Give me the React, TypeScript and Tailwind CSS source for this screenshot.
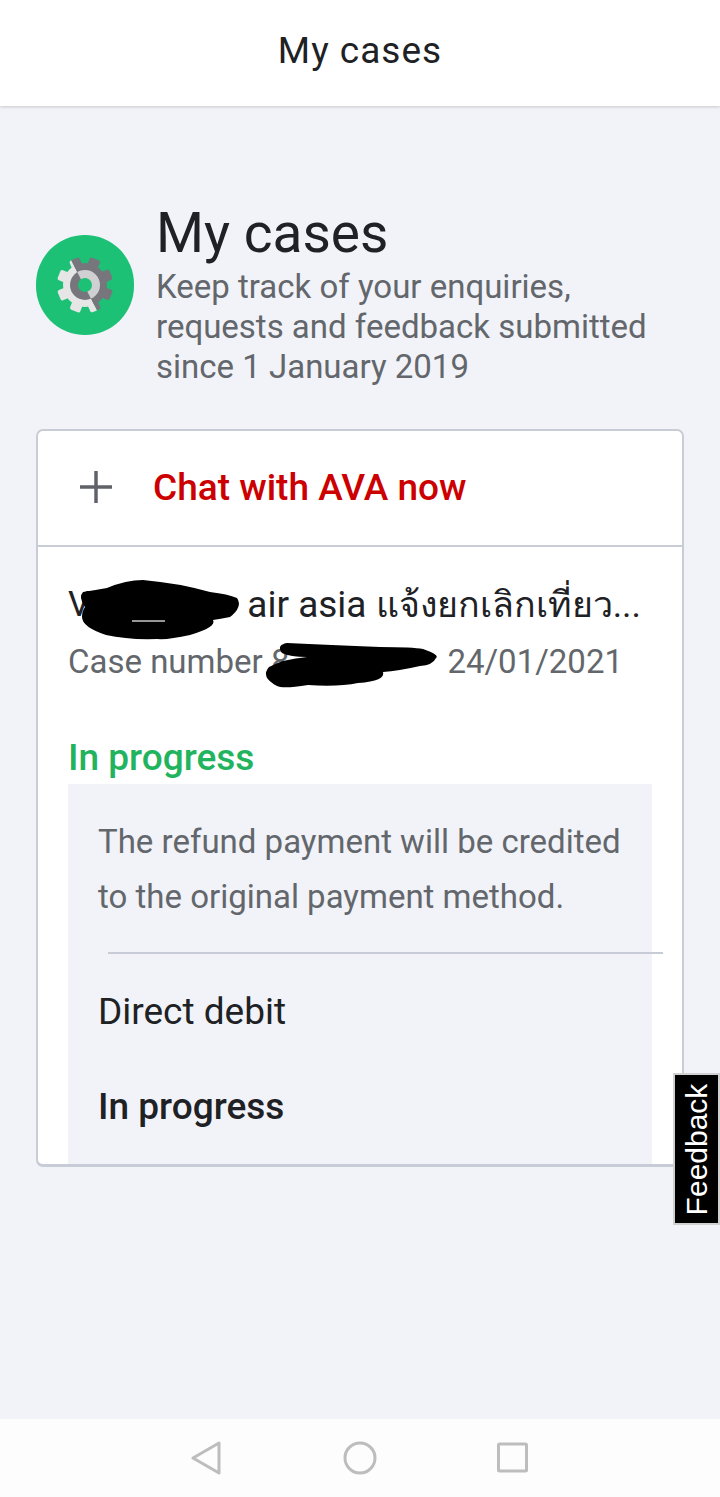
function GearLogo() {
  const teeth = [0, 45, 90, 135, 180, 225, 270, 315];
  return (
    <div className="mt-[32px] flex h-[100px] w-[98px] shrink-0 items-center justify-center rounded-full bg-[#1cc175]">
      <svg width="62" height="62" viewBox="0 0 62 62">
        <defs>
          <clipPath id="dark">
            <polygon points="14,0 62,0 62,62 46,62" />
          </clipPath>
          <clipPath id="light">
            <polygon points="14,0 46,62 0,62 0,0" />
          </clipPath>
        </defs>
        <g clipPath="url(#light)">
          <circle cx="31" cy="31" r="22" fill="#e6e6e6" />
          {teeth.map((t) => (
            <rect key={t} x="25.5" y="3" width="11" height="12" rx="2" fill="#e6e6e6" transform={`rotate(${t + 22} 31 31)`} />
          ))}
          <circle cx="31" cy="31" r="15" fill="#77767c" />
        </g>
        <g clipPath="url(#dark)">
          <circle cx="31" cy="31" r="22" fill="#77767c" />
          {teeth.map((t) => (
            <rect key={t} x="25.5" y="3" width="11" height="12" rx="2" fill="#77767c" transform={`rotate(${t + 22} 31 31)`} />
          ))}
          <circle cx="31" cy="31" r="15" fill="#d0d0d3" />
        </g>
        <circle cx="31" cy="31" r="7" fill="#1cc175" />
      </svg>
    </div>
  );
}

function NavBar() {
  return (
    <div className="flex h-[78px] items-center bg-[#fdfdfd]">
      <div className="flex w-full items-center justify-center gap-[120px] pr-[2px]">
        <svg width="34" height="34" viewBox="0 0 34 34" fill="none" stroke="#bdbdbd" strokeWidth="3" strokeLinejoin="round">
          <path d="M4 17 L30 2 V32 Z" />
        </svg>
        <svg width="34" height="34" viewBox="0 0 34 34" fill="none" stroke="#bdbdbd" strokeWidth="3">
          <circle cx="17" cy="17" r="15" />
        </svg>
        <svg width="32" height="32" viewBox="0 0 32 32" fill="none" stroke="#bdbdbd" strokeWidth="3" strokeLinejoin="round">
          <rect x="1.5" y="2" width="28" height="27" rx="1" />
        </svg>
      </div>
    </div>
  );
}

export default function App() {
  return (
    <div className="relative flex h-[1497px] w-[720px] flex-col overflow-hidden bg-[#f1f3f8] font-['Roboto',sans-serif] text-[#202124]">
      <header className="flex h-[106px] shrink-0 items-center justify-center bg-white shadow-[0_1px_3px_rgba(0,0,0,0.18)]">
        <h1 className="mt-[-4px] text-[37px] tracking-[1px]">My cases</h1>
      </header>

      <main className="flex-1 px-[36px] pt-[97px]">
        <div className="flex items-start gap-[22px]">
          <GearLogo />
          <div>
            <h2 className="text-[55px] leading-[60px]">My cases</h2>
            <p className="mt-[4px] text-[33px] leading-[40px] text-[#63676c]">
              Keep track of your enquiries,
              <br />
              requests and feedback submitted
              <br />
              since 1 January 2019
            </p>
          </div>
        </div>

        <section className="mt-[42px] h-[738px] w-[648px] overflow-hidden rounded-[7px] border-2 border-b-[3px] border-[#c8ccd6] bg-white">
          <div className="flex h-[116px] items-center gap-[39px] border-b-2 border-[#c8ccd6] pl-[40px]">
            <svg className="mt-[-3px]" width="36" height="36" viewBox="0 0 36 36" fill="none" stroke="#5f6368" strokeWidth="3.5">
              <path d="M18 2 V34 M2 18 H34" />
            </svg>
            <span className="text-[37px] font-medium text-[#cc0000]">Chat with AVA now</span>
          </div>

          <div className="relative px-[30px] pt-[33px]">
            <div className="flex items-center justify-between pr-[11px] leading-[50px]">
              <span className="text-[35px]">V</span>
              <span className="text-[37px]">
                air asia <span className="text-[35.8px]">แจ้งยกเลิกเที่ยว...</span>
              </span>
            </div>
            <div className="mt-[11px] flex items-center justify-between pr-[29px] text-[33px] leading-[42px] text-[#63676c]">
              <span>Case number 8</span>
              <span>24/01/2021</span>
            </div>
            {/* the redaction scribbles lie over the text */}
            <svg className="absolute left-[30px] top-[30px]" width="380" height="115" viewBox="0 0 380 115" fill="#000">
              <path d="M15 15 Q28 13 39 11 Q58 3 75 3 Q110 6 142 15 Q160 17 169 21 Q175 30 162 40 Q152 42 145 43 Q149 50 122 58 Q100 63 89 62 Q60 63 38 58 Q14 50 14 40 Q14 34 17 30 Q10 20 15 15 Z" />
              <path d="M64 44 H97" stroke="#c9c9c9" strokeWidth="1.5" fill="none" />
              <path d="M214 76 Q208 68 219 66 Q262 68 312 70 Q345 70 355 72 Q372 78 368 81 Q365 88 352 89 Q330 94 315 95 Q318 104 290 106 Q270 110 240 108 Q215 112 209 109 Q192 100 201 90 Q215 82 239 80 Q222 80 214 76 Z" />
            </svg>

            <div className="mt-[49px] text-[37px] font-medium leading-[52px] text-[#22b35e]">In progress</div>

            <div className="h-[381px] w-[584px] bg-[#f1f3f8] pl-[30px] pt-[30px]">
              <p className="text-[33px] leading-[55px] text-[#63676c]">
                The refund payment will be credited
                <br />
                to the original payment method.
              </p>
              <div className="ml-[10px] mr-[-11px] mt-[28px] h-[2px] bg-[#c8ccd6]" />
              <div className="mt-[33px] text-[37px] leading-[50px]">Direct debit</div>
              <div className="mt-[45px] text-[37px] font-medium leading-[50px]">In progress</div>
            </div>
          </div>
        </section>
      </main>

      <NavBar />

      <button className="absolute left-[673px] top-[1073px] flex h-[152px] w-[47px] items-center justify-center border-2 border-[#d0d0d0] bg-black">
        <span className="rotate-[-90deg] font-['Liberation_Sans',sans-serif] text-[30px] text-white">Feedback</span>
      </button>
    </div>
  );
}
